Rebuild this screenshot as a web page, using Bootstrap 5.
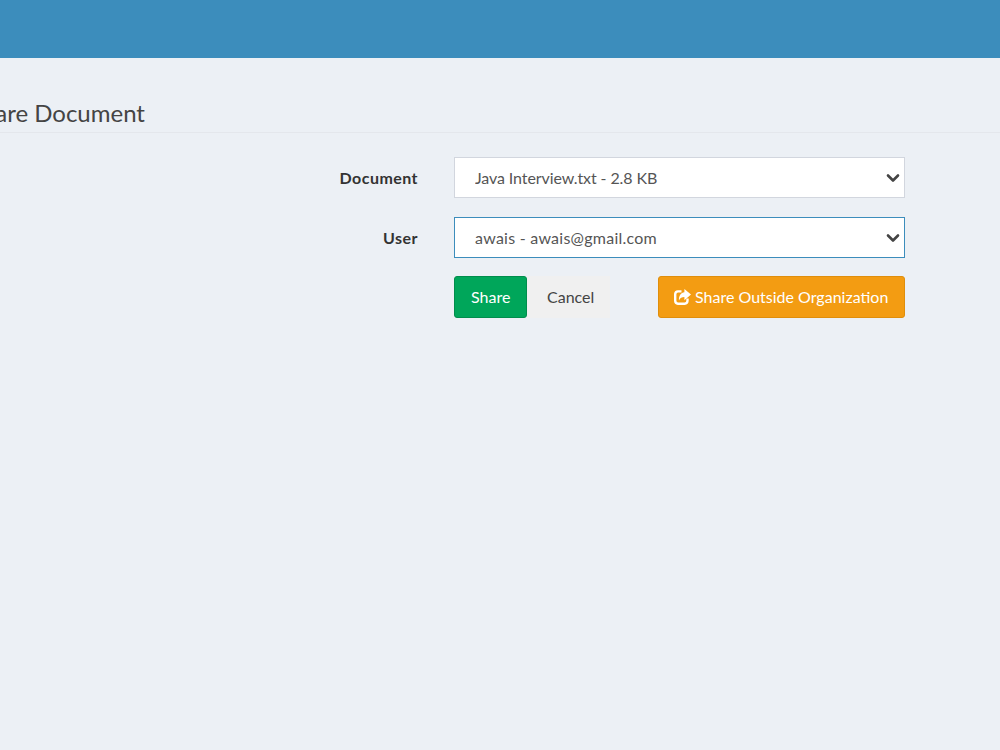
<!DOCTYPE html>
<html lang="en">
<head>
    <meta charset="UTF-8" />
    <meta name="viewport" content="width=device-width, initial-scale=1.0" />
    <title>Share Document</title>
    <link href="https://cdn.jsdelivr.net/npm/bootstrap@5.3.0/dist/css/bootstrap.min.css" rel="stylesheet" />
    <style>
        body { background: #ecf0f5; font-family: "Lato", "Open Sans", sans-serif; font-size: 16px; color: #333; overflow-x: hidden; }
        .top-bar { height: 58px; background: #3c8dbc; }
        .page-head { height: 75px; border-bottom: 1px solid #e4e7ec; padding-top: 40px; }
        .page-head h1 { font-size: 24px; line-height: 30px; margin: 0 0 0 -31px; color: #444; font-weight: 400; }
        .share-form { padding: 24px 95px 0 0; }
        .field-row { margin-bottom: 19px; }
        .field-label { width: 418px; text-align: right; font-weight: 700; letter-spacing: .45px; margin: 0; flex-shrink: 0; }
        .field-body { margin-left: 36px; flex-grow: 1; }
        .share-select { height: 41px; border-radius: 0; border: 1px solid #d2d6de; padding: 0 30px 0 20px; color: #555; font-size: 16px; letter-spacing: -.1px; background-size: 16px 16px; background-position: right 3px center; background-image: url("data:image/svg+xml,%3csvg xmlns='http://www.w3.org/2000/svg' viewBox='0 0 16 16'%3e%3cpath fill='none' stroke='%23444' stroke-linecap='round' stroke-linejoin='round' stroke-width='2.6' d='m3 5.5 5 5 5-5'/%3e%3c/svg%3e"); }
        .share-select.is-focused { border-color: #3c8dbc; letter-spacing: .25px; }
        .action-row { margin-top: -1px; }
        .btn-share, .btn-cancel, .btn-outside { height: 42px; font-size: 16px; border-radius: 3px; display: inline-flex; align-items: center; }
        .btn-share { width: 73px; padding: 0 16px; background: #00a65a; border: 1px solid #008d4c; color: #fff; }
        .btn-cancel { width: 83px; background: #f0f0f0; border: 0; border-radius: 0; color: #444; padding: 0 20px; }
        .btn-outside { width: 247px; padding: 0 0 0 15px; background: #f39c12; border: 1px solid #e08e0b; color: #fff; gap: 4px; white-space: nowrap; }
    </style>
</head>
<body>
    <div class="top-bar"></div>
    <div class="page-head">
        <h1>Share Document</h1>
    </div>
    <form class="share-form">
        <div class="d-flex align-items-center field-row">
            <label class="field-label" for="document">Document</label>
            <div class="field-body">
                <select class="form-select share-select" id="document">
                    <option>Java Interview.txt - 2.8 KB</option>
                </select>
            </div>
        </div>
        <div class="d-flex align-items-center field-row">
            <label class="field-label" for="user">User</label>
            <div class="field-body">
                <select class="form-select share-select is-focused" id="user">
                    <option>awais - awais@gmail.com</option>
                </select>
            </div>
        </div>
        <div class="d-flex action-row">
            <div class="field-label"></div>
            <div class="field-body d-flex justify-content-between">
                <div class="d-flex">
                    <button type="button" class="btn btn-share">Share</button>
                    <button type="button" class="btn btn-cancel">Cancel</button>
                </div>
                <button type="button" class="btn btn-outside">
                    <svg width="17" height="16" viewBox="0 0 17 16" fill="none" aria-hidden="true">
                        <path d="M7.5 2.4H4A3 3 0 0 0 1.2 5.2v6.6A3 3 0 0 0 4 14.7h6.6a3 3 0 0 0 2.9-2.9V9.5" stroke="#fff" stroke-width="2.4"/>
                        <path d="M10.4 0L17 5.6L10.4 11.2V8C8 8 6 8.8 5 11.6C4.6 7 7 3.6 10.4 3.3Z" fill="#fff"/>
                    </svg>
                    Share Outside Organization
                </button>
            </div>
        </div>
    </form>
    <script src="https://cdn.jsdelivr.net/npm/bootstrap@5.3.0/dist/js/bootstrap.bundle.min.js"></script>
</body>
</html>
